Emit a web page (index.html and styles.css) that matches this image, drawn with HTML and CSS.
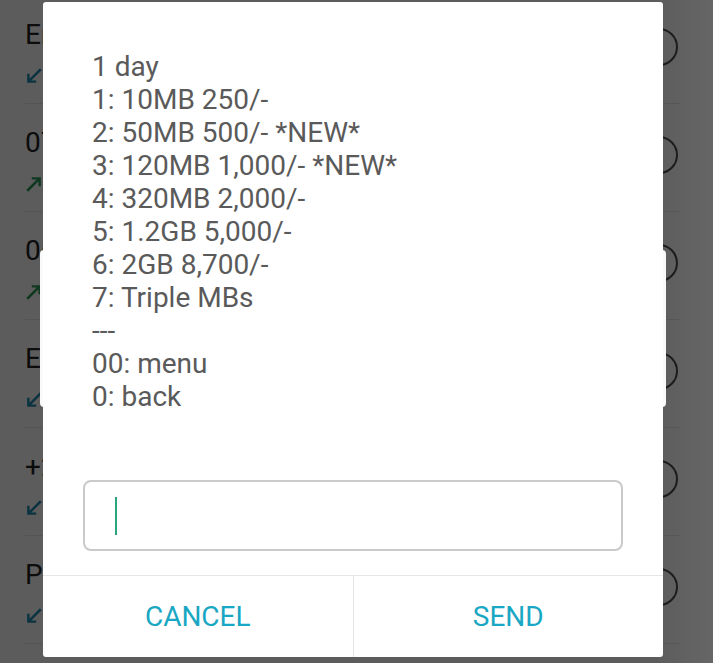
FILE: index.html
```html
<!DOCTYPE html>
<html lang="en">

<head>
  <meta charset="UTF-8">
  <meta name="viewport" content="width=device-width, initial-scale=1.0">
  <link rel="stylesheet" href="styles.css">
  <title>USSD</title>
</head>

<body>
  <!-- call log behind the dialog -->
  <ul class="calls">
    <li class="call">
      <span class="call-name">Ema</span>
      <svg class="call-dir in" viewBox="0 0 16 16"><path d="M14 2L3 13M3 6v7h7" /></svg>
      <span class="call-radio"></span>
    </li>
    <li class="call">
      <span class="call-name">075</span>
      <svg class="call-dir out" viewBox="0 0 16 16"><path d="M2 14L13 3M6 3h7v7" /></svg>
      <span class="call-radio"></span>
    </li>
    <li class="call">
      <span class="call-name">068</span>
      <svg class="call-dir out" viewBox="0 0 16 16"><path d="M2 14L13 3M6 3h7v7" /></svg>
      <span class="call-radio"></span>
    </li>
    <li class="call">
      <span class="call-name">Eli</span>
      <svg class="call-dir in" viewBox="0 0 16 16"><path d="M14 2L3 13M3 6v7h7" /></svg>
      <span class="call-radio"></span>
    </li>
    <li class="call">
      <span class="call-name">+25</span>
      <svg class="call-dir in" viewBox="0 0 16 16"><path d="M14 2L3 13M3 6v7h7" /></svg>
      <span class="call-radio"></span>
    </li>
    <li class="call">
      <span class="call-name">Pau</span>
      <svg class="call-dir in" viewBox="0 0 16 16"><path d="M14 2L3 13M3 6v7h7" /></svg>
      <span class="call-radio"></span>
    </li>
  </ul>

  <div class="scrim"></div>
  <div class="ghost"></div>

  <div class="dialog">
    <div class="message">1 day
1: 10MB 250/-
2: 50MB 500/- *NEW*
3: 120MB 1,000/- *NEW*
4: 320MB 2,000/-
5: 1.2GB 5,000/-
6: 2GB 8,700/-
7: Triple MBs
---
00: menu
0: back</div>

    <div class="reply">
      <span class="cursor"></span>
    </div>

    <div class="actions">
      <button class="action">CANCEL</button>
      <button class="action">SEND</button>
    </div>
  </div>
</body>

</html>
```

FILE: styles.css
```css
body {
  font-family: 'Roboto', 'Liberation Sans', sans-serif;
  margin: 0;
  width: 713px;
  height: 663px;
  overflow: hidden;
  position: relative;
  background-color: #fff;
}

.calls {
  list-style-type: none;
  margin: -4px 0 0 0;
  padding: 0;
}

.call {
  height: 108px;
  box-sizing: border-box;
  margin: 0 33px 0 25px;
  border-bottom: 1px solid #e8e8e8;
  display: grid;
  grid-template-columns: 1fr 40px;
  grid-template-rows: 44px 1fr;
  padding-top: 23px;
}

.call-name {
  font-size: 28px;
  color: #222;
  line-height: 32px;
  white-space: nowrap;
}

.call-dir {
  width: 18px;
  height: 18px;
  margin-top: 4px;
  fill: none;
  stroke-width: 2.2;
}

.call-dir.in {
  stroke: #1c8fb0;
}

.call-dir.out {
  stroke: #2a9a5a;
}

.call-radio {
  grid-column: 2;
  grid-row: 1 / 3;
  width: 38px;
  height: 38px;
  margin-top: 9px;
  border: 2px solid #4a4a4a;
  border-radius: 50%;
  box-sizing: border-box;
}

.scrim {
  position: absolute;
  inset: 0;
  background: linear-gradient(to right, rgba(0, 0, 0, 0.64) 92%, rgba(0, 0, 0, 0.6));
}

.ghost {
  position: absolute;
  left: 40px;
  top: 250px;
  width: 626px;
  height: 157px;
  border-radius: 4px;
  background-color: #fafafa;
}

.dialog {
  position: absolute;
  left: 43px;
  top: 2px;
  width: 620px;
  height: 655px;
  background-color: #fff;
  border-radius: 3px;
  display: flex;
  flex-direction: column;
}

.message {
  padding: 48px 0 0 49px;
  font-size: 28px;
  line-height: 33px;
  color: #5a5a5a;
  white-space: pre-line;
}

.reply {
  margin: 67px 0 0 40px;
  width: 540px;
  height: 71px;
  box-sizing: border-box;
  border: 2px solid #cacaca;
  border-radius: 8px;
  display: flex;
  align-items: center;
  padding-left: 30px;
}

.cursor {
  width: 2px;
  height: 38px;
  background-color: #2aa57a;
}

.actions {
  margin-top: auto;
  height: 81px;
  border-top: 1px solid #e6e6e6;
  display: flex;
}

.action {
  flex: 1;
  background: none;
  border: none;
  padding: 0;
  font-family: inherit;
  font-size: 28px;
  color: #1aa7c3;
}

.action + .action {
  border-left: 1px solid #e6e6e6;
}
```
